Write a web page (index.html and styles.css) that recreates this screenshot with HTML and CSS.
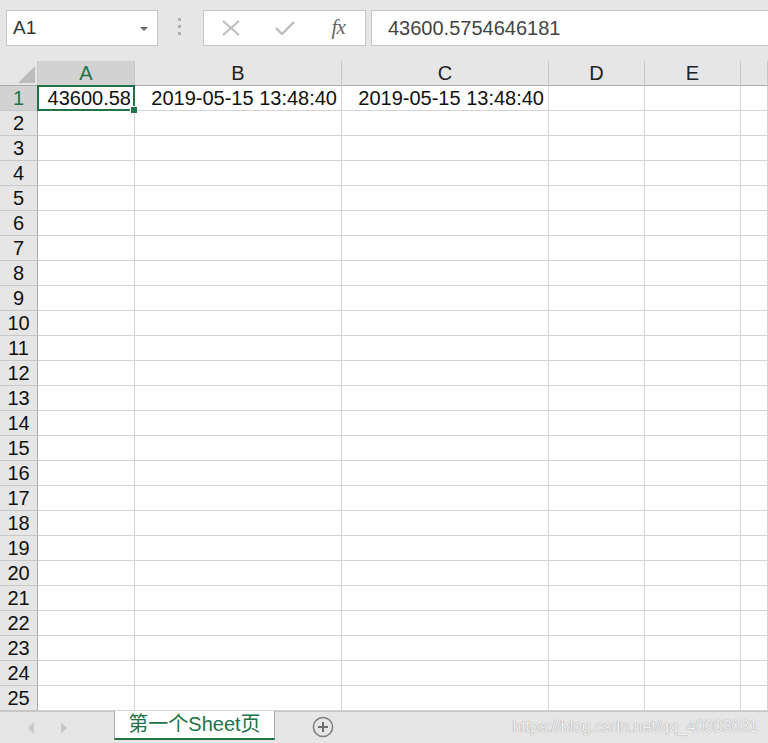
FILE: index.html
```html
<!DOCTYPE html>
<html>
<head>
  <meta charset="utf-8">
  <link rel="stylesheet" href="styles.css">
</head>
<body>
  <div class="toolbar">
    <div class="namebox">
      <span>A1</span>
      <span class="caret"></span>
    </div>
    <div class="grip"><i></i><i></i><i></i></div>
    <div class="fx-buttons">
      <span class="fx-btn">
        <svg width="18" height="16" viewBox="0 0 18 16"><path d="M1 1 L17 15 M17 1 L1 15" stroke="#bdbdbd" stroke-width="2" fill="none"/></svg>
      </span>
      <span class="fx-btn">
        <svg width="20" height="14" viewBox="0 0 20 14"><path d="M1 7 L7 13 L19 1" stroke="#bdbdbd" stroke-width="2.4" fill="none"/></svg>
      </span>
      <span class="fx-btn fx-label">fx</span>
    </div>
    <div class="formula">43600.5754646181</div>
  </div>

  <div class="sheet">
    <div class="row head">
      <div class="corner"><span class="tri"></span></div>
      <div class="col sel">A</div>
      <div class="col">B</div>
      <div class="col">C</div>
      <div class="col">D</div>
      <div class="col">E</div>
      <div class="col"></div>
    </div>
    <div class="row">
      <div class="rh sel">1</div>
      <div class="cell active">43600.58</div>
      <div class="cell">2019-05-15 13:48:40</div>
      <div class="cell">2019-05-15 13:48:40</div>
      <div class="cell"></div><div class="cell"></div><div class="cell"></div>
    </div>
    <div class="row"><div class="rh">2</div><div class="cell"></div><div class="cell"></div><div class="cell"></div><div class="cell"></div><div class="cell"></div><div class="cell"></div></div>
    <div class="row"><div class="rh">3</div><div class="cell"></div><div class="cell"></div><div class="cell"></div><div class="cell"></div><div class="cell"></div><div class="cell"></div></div>
    <div class="row"><div class="rh">4</div><div class="cell"></div><div class="cell"></div><div class="cell"></div><div class="cell"></div><div class="cell"></div><div class="cell"></div></div>
    <div class="row"><div class="rh">5</div><div class="cell"></div><div class="cell"></div><div class="cell"></div><div class="cell"></div><div class="cell"></div><div class="cell"></div></div>
    <div class="row"><div class="rh">6</div><div class="cell"></div><div class="cell"></div><div class="cell"></div><div class="cell"></div><div class="cell"></div><div class="cell"></div></div>
    <div class="row"><div class="rh">7</div><div class="cell"></div><div class="cell"></div><div class="cell"></div><div class="cell"></div><div class="cell"></div><div class="cell"></div></div>
    <div class="row"><div class="rh">8</div><div class="cell"></div><div class="cell"></div><div class="cell"></div><div class="cell"></div><div class="cell"></div><div class="cell"></div></div>
    <div class="row"><div class="rh">9</div><div class="cell"></div><div class="cell"></div><div class="cell"></div><div class="cell"></div><div class="cell"></div><div class="cell"></div></div>
    <div class="row"><div class="rh">10</div><div class="cell"></div><div class="cell"></div><div class="cell"></div><div class="cell"></div><div class="cell"></div><div class="cell"></div></div>
    <div class="row"><div class="rh">11</div><div class="cell"></div><div class="cell"></div><div class="cell"></div><div class="cell"></div><div class="cell"></div><div class="cell"></div></div>
    <div class="row"><div class="rh">12</div><div class="cell"></div><div class="cell"></div><div class="cell"></div><div class="cell"></div><div class="cell"></div><div class="cell"></div></div>
    <div class="row"><div class="rh">13</div><div class="cell"></div><div class="cell"></div><div class="cell"></div><div class="cell"></div><div class="cell"></div><div class="cell"></div></div>
    <div class="row"><div class="rh">14</div><div class="cell"></div><div class="cell"></div><div class="cell"></div><div class="cell"></div><div class="cell"></div><div class="cell"></div></div>
    <div class="row"><div class="rh">15</div><div class="cell"></div><div class="cell"></div><div class="cell"></div><div class="cell"></div><div class="cell"></div><div class="cell"></div></div>
    <div class="row"><div class="rh">16</div><div class="cell"></div><div class="cell"></div><div class="cell"></div><div class="cell"></div><div class="cell"></div><div class="cell"></div></div>
    <div class="row"><div class="rh">17</div><div class="cell"></div><div class="cell"></div><div class="cell"></div><div class="cell"></div><div class="cell"></div><div class="cell"></div></div>
    <div class="row"><div class="rh">18</div><div class="cell"></div><div class="cell"></div><div class="cell"></div><div class="cell"></div><div class="cell"></div><div class="cell"></div></div>
    <div class="row"><div class="rh">19</div><div class="cell"></div><div class="cell"></div><div class="cell"></div><div class="cell"></div><div class="cell"></div><div class="cell"></div></div>
    <div class="row"><div class="rh">20</div><div class="cell"></div><div class="cell"></div><div class="cell"></div><div class="cell"></div><div class="cell"></div><div class="cell"></div></div>
    <div class="row"><div class="rh">21</div><div class="cell"></div><div class="cell"></div><div class="cell"></div><div class="cell"></div><div class="cell"></div><div class="cell"></div></div>
    <div class="row"><div class="rh">22</div><div class="cell"></div><div class="cell"></div><div class="cell"></div><div class="cell"></div><div class="cell"></div><div class="cell"></div></div>
    <div class="row"><div class="rh">23</div><div class="cell"></div><div class="cell"></div><div class="cell"></div><div class="cell"></div><div class="cell"></div><div class="cell"></div></div>
    <div class="row"><div class="rh">24</div><div class="cell"></div><div class="cell"></div><div class="cell"></div><div class="cell"></div><div class="cell"></div><div class="cell"></div></div>
    <div class="row"><div class="rh">25</div><div class="cell"></div><div class="cell"></div><div class="cell"></div><div class="cell"></div><div class="cell"></div><div class="cell"></div></div>
  </div>

  <div class="tabbar">
    <div class="tab-nav">
      <span class="nav-left"></span>
      <span class="nav-right"></span>
    </div>
    <div class="tab">第一个Sheet页</div>
    <span class="add-sheet">
      <svg width="22" height="22" viewBox="0 0 22 22"><circle cx="11" cy="11" r="9.6" stroke="#7d7d7d" stroke-width="1.5" fill="none"/><path d="M11 6 V16 M6 11 H16" stroke="#6d6d6d" stroke-width="2" fill="none"/></svg>
    </span>
    <span class="watermark">https://blog.csdn.net/qq_40303031</span>
  </div>
</body>
</html>
```

FILE: styles.css
```css
html, body {
  margin: 0;
  height: 743px;
  overflow: hidden;
}

body {
  background: #e6e6e6;
  font-family: "Liberation Sans", Arial, "Noto Sans CJK SC", sans-serif;
  display: flex;
  flex-direction: column;
}

/* top: name box + formula bar */
.toolbar {
  height: 61px;
  flex: none;
  display: flex;
  align-items: flex-start;
  padding: 10px 0 0 6px;
  box-sizing: border-box;
}

.namebox {
  width: 152px;
  height: 36px;
  box-sizing: border-box;
  background: white;
  border: 1px solid #c6c6c6;
  display: flex;
  align-items: center;
  justify-content: space-between;
  padding: 0 9px 0 6px;
  font-size: 19px;
  color: #333;
}

.caret {
  border-top: 4px solid #6a6a6a;
  border-left: 4px solid transparent;
  border-right: 4px solid transparent;
  margin-top: 1px;
}

.grip {
  display: flex;
  flex-direction: column;
  gap: 4px;
  margin: 8px 0 0 20px;
}

.grip i {
  display: block;
  width: 3px;
  height: 3px;
  background: #b0b0b0;
}

.fx-buttons {
  margin-left: 22px;
  width: 163px;
  height: 36px;
  box-sizing: border-box;
  background: white;
  border: 1px solid #c6c6c6;
  display: flex;
}

.fx-btn {
  flex: 1;
  display: flex;
  align-items: center;
  justify-content: center;
}

.fx-label {
  font-family: "Liberation Serif", "Times New Roman", serif;
  font-style: italic;
  font-size: 21px;
  color: #666;
  letter-spacing: -1px;
  padding-bottom: 2px;
}

.formula {
  flex: 1;
  margin-left: 5px;
  height: 36px;
  box-sizing: border-box;
  background: white;
  border: 1px solid #c6c6c6;
  border-right: none;
  padding-left: 16px;
  font-size: 20px;
  line-height: 34px;
  color: #444;
}

/* grid */
.sheet {
  flex: none;
  background: white;
}

.row {
  display: grid;
  grid-template-columns: 38px 97px 207px 207px 96px 96px 1fr;
  height: 25px;
}

.row > div {
  box-sizing: border-box;
  border-right: 1px solid #d4d4d4;
  border-bottom: 1px solid #d4d4d4;
  font-size: 20px;
  line-height: 24px;
  color: #111;
  white-space: nowrap;
}

.head > div {
  background: #e6e6e6;
  border-right-color: #c8c8c8;
  border-bottom-color: #ababab;
  text-align: center;
  color: #222;
}

.corner {
  display: flex;
  justify-content: flex-end;
  align-items: flex-end;
  padding: 0 2px 2px 0;
}

.tri {
  border-left: 17px solid transparent;
  border-bottom: 17px solid #bdbdbd;
}

.row > .rh {
  background: #e6e6e6;
  border-right-color: #ababab;
  border-bottom-color: #c8c8c8;
  text-align: center;
  color: #111;
}

.row > .sel {
  background: #d2d2d2;
  color: #217346;
}

.cell {
  text-align: right;
  padding-right: 4px;
}

.row > .active {
  position: relative;
  padding-right: 3px;
}

.active::before {
  content: "";
  position: absolute;
  left: -1px;
  top: -1px;
  right: -1px;
  bottom: -1px;
  border: 2px solid #217346;
}

.active::after {
  content: "";
  position: absolute;
  right: -4px;
  bottom: -4px;
  width: 6px;
  height: 6px;
  background: #217346;
  border: 1px solid white;
}

/* sheet tabs */
.tabbar {
  flex: 1;
  display: flex;
  align-items: stretch;
  border-top: 1px solid #c6c6c6;
  border-bottom: 1px solid #cfcfcf;
  background: #e6e6e6;
}

.tab-nav {
  width: 114px;
  display: flex;
  align-items: center;
  gap: 27px;
  padding-left: 28px;
  box-sizing: border-box;
}

.nav-left {
  border-right: 6px solid #c8c8c8;
  border-top: 6px solid transparent;
  border-bottom: 6px solid transparent;
}

.nav-right {
  border-left: 6px solid #c8c8c8;
  border-top: 6px solid transparent;
  border-bottom: 6px solid transparent;
}

.tab {
  width: 161px;
  box-sizing: border-box;
  margin-top: -1px;
  margin-bottom: 3px;
  background: white;
  border-left: 1px solid #ababab;
  border-right: 1px solid #ababab;
  border-bottom: 2px solid #217346;
  text-align: center;
  font-size: 20px;
  line-height: 27px;
  color: #217346;
}

.add-sheet {
  margin-left: 37px;
  display: flex;
  align-items: center;
  padding-bottom: 2px;
}

.watermark {
  margin-left: auto;
  padding-right: 10px;
  display: flex;
  align-items: center;
  padding-bottom: 2px;
  font-size: 16px;
  color: #f2f2f2;
  text-shadow: 0 0 1px #9a9a9a, 0 0 1px #b0b0b0;
}
```
